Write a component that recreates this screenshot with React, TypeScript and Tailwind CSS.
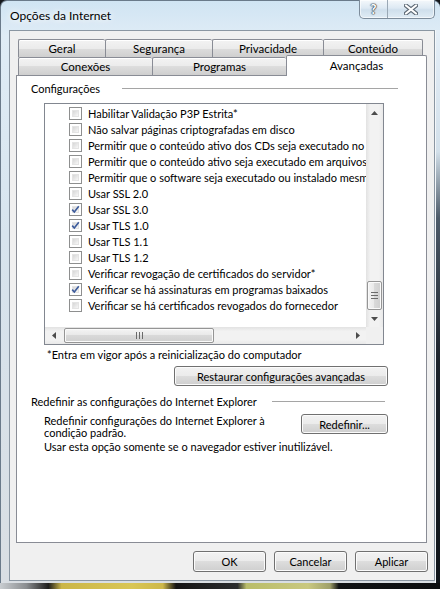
import React from "react";

const items: { label: string; checked: boolean }[] = [
  { label: "Habilitar Validação P3P Estrita*", checked: false },
  { label: "Não salvar páginas criptografadas em disco", checked: false },
  { label: "Permitir que o conteúdo ativo dos CDs seja executado no Meu Computador*", checked: false },
  { label: "Permitir que o conteúdo ativo seja executado em arquivos no Meu Computador*", checked: false },
  { label: "Permitir que o software seja executado ou instalado mesmo que a assinatura seja inválida", checked: false },
  { label: "Usar SSL 2.0", checked: false },
  { label: "Usar SSL 3.0", checked: true },
  { label: "Usar TLS 1.0", checked: true },
  { label: "Usar TLS 1.1", checked: false },
  { label: "Usar TLS 1.2", checked: false },
  { label: "Verificar revogação de certificados do servidor*", checked: false },
  { label: "Verificar se há assinaturas em programas baixados", checked: true },
  { label: "Verificar se há certificados revogados do fornecedor", checked: false },
];

function Checkbox({ checked }: { checked: boolean }) {
  return (
    <div className="relative w-[13px] h-[13px] shrink-0 border border-[#8e8f8f] bg-white p-[2px]">
      <div className="w-full h-full bg-[linear-gradient(135deg,#d6d6d6,#f7f7f7)] border border-[#e4e4e4]" />
      {checked && (
        <svg className="absolute left-0 top-0" width="11" height="11" viewBox="0 0 11 11">
          <path d="M2.2 5.6 L4.3 8 L8.8 2.2" fill="none" stroke="#3d5c9c" strokeWidth="1.6" />
        </svg>
      )}
    </div>
  );
}

function Button({ label, className }: { label: string; className: string }) {
  return (
    <div
      className={
        "flex items-center justify-center rounded-[3px] border border-[#707070] bg-[linear-gradient(#f2f2f2,#ebebeb_50%,#dddddd_50%,#cfcfcf)] shadow-[inset_0_0_0_1px_#fbfbfb] text-black " +
        className
      }
    >
      {label}
    </div>
  );
}

function Arrow({ dir }: { dir: "up" | "down" | "left" | "right" }) {
  const pts = {
    up: "0,4 3.5,0 7,4",
    down: "0,0 7,0 3.5,4",
    left: "4,0 4,7 0,3.5",
    right: "0,0 4,3.5 0,7",
  }[dir];
  const vertical = dir === "up" || dir === "down";
  return (
    <svg width={vertical ? 7 : 4} height={vertical ? 4 : 7} viewBox={vertical ? "0 0 7 4" : "0 0 4 7"}>
      <polygon points={pts} fill="#4d4d4d" />
    </svg>
  );
}

function ListBox() {
  return (
    <div className="ml-[27px] mt-[7px] w-[340px] h-[242px] border border-[#828790] bg-white flex flex-col">
      <div className="flex flex-1 min-h-0">
        <div className="flex-1 min-w-0 overflow-hidden pt-[1px]">
          {items.map((it) => (
            <div key={it.label} className="flex items-center h-[16px] pl-[24px] gap-[6px] whitespace-nowrap">
              <Checkbox checked={it.checked} />
              <span>{it.label}</span>
            </div>
          ))}
        </div>
        {/* vertical scrollbar */}
        <div className="w-[17px] flex flex-col bg-[linear-gradient(to_right,#e2e2e2,#f2f2f2_25%,#f2f2f2_75%,#e9e9e9)]">
          <div className="h-[17px] flex items-center justify-center">
            <Arrow dir="up" />
          </div>
          <div className="flex-1" />
          <div className="mx-[1px] h-[29px] rounded-[2px] border border-[#959595] bg-[linear-gradient(to_right,#f4f4f4,#e8e8e8_50%,#d9d9d9_50%,#cfcfcf)] shadow-[inset_0_0_0_1px_#fafafa] flex flex-col items-center justify-center gap-[2px]">
            <div className="w-[7px] h-px bg-[#6a6a6a]" />
            <div className="w-[7px] h-px bg-[#6a6a6a]" />
            <div className="w-[7px] h-px bg-[#6a6a6a]" />
          </div>
          <div className="h-[17px] flex items-center justify-center">
            <Arrow dir="down" />
          </div>
        </div>
      </div>
      {/* horizontal scrollbar */}
      <div className="h-[17px] flex">
        <div className="flex-1 flex items-center bg-[linear-gradient(#e2e2e2,#f2f2f2_25%,#f2f2f2_75%,#e9e9e9)]">
          <div className="w-[17px] h-full flex items-center justify-center">
            <Arrow dir="left" />
          </div>
          <div className="ml-[2px] w-[150px] h-[15px] rounded-[2px] border border-[#959595] bg-[linear-gradient(#f4f4f4,#e8e8e8_50%,#d9d9d9_50%,#cfcfcf)] shadow-[inset_0_0_0_1px_#fafafa] flex items-center justify-center gap-[2px]">
            <div className="w-px h-[7px] bg-[#6a6a6a]" />
            <div className="w-px h-[7px] bg-[#6a6a6a]" />
            <div className="w-px h-[7px] bg-[#6a6a6a]" />
          </div>
          <div className="flex-1" />
          <div className="w-[17px] h-full flex items-center justify-center">
            <Arrow dir="right" />
          </div>
        </div>
        <div className="w-[17px] bg-[#f0f0f0]" />
      </div>
    </div>
  );
}

function Tab({ label, w, selected }: { label: string; w: string; selected?: boolean }) {
  if (selected) {
    return (
      <div
        className={
          "relative z-10 -mt-[2px] -mb-px h-[21px] flex justify-center pt-[2px] bg-white border border-b-0 border-[#898c95] rounded-t-[2px] " +
          w
        }
      >
        {label}
      </div>
    );
  }
  return (
    <div
      className={
        "h-[18px] flex items-center justify-center border-t border-l border-[#898c95] rounded-t-[2px] bg-[linear-gradient(#f3f3f3,#ebebeb_50%,#dddddd_50%,#cfcfcf)] shadow-[inset_0_1px_0_#fff] " +
        w
      }
    >
      {label}
    </div>
  );
}

export default function App() {
  return (
    <div className="w-[440px] h-[589px] overflow-hidden flex flex-col bg-[#15181c] font-['Segoe_UI',Lato,'Liberation_Sans',sans-serif] text-[11px] leading-[15px] text-black">
      {/* window */}
      <div className="h-[583px] flex flex-col rounded-t-[7px] border-l border-t border-[#6a7a8a] bg-[linear-gradient(to_bottom,#d0e4f3,#dfecf6_6%,#d7e4ee_40%,#d9dee3_100%)]">
        {/* title bar */}
        <div className="h-[29px] flex items-start">
          <div className="pl-[9px] pt-[7px] text-[12px] [text-shadow:0_0_6px_#fff,0_0_10px_#fff]">Opções da Internet</div>
          <div className="ml-auto mr-[5px] flex h-[19px] -mt-px rounded-b-[5px] border border-t-0 border-[#7d8c9b] bg-[linear-gradient(#f4f8fb,#dde9f3_45%,#cfdfec_55%,#e0ecf5)] shadow-[inset_0_0_0_1px_rgba(255,255,255,0.6)]">
            <div className="w-[28px] flex items-center justify-center border-r border-[#9aa8b5] font-bold text-[13px] text-white [text-shadow:0_0_1px_#3c4650,0_0_1px_#3c4650,0_0_1px_#3c4650,0_0_2px_#3c4650]">
              ?
            </div>
            <div className="w-[46px] flex items-center justify-center">
              <svg width="14" height="11" viewBox="0 0 14 11">
                <path d="M2 1.5 L12 9.5 M12 1.5 L2 9.5" stroke="#5b6773" strokeWidth="4.2" strokeLinecap="round" />
                <path d="M2 1.5 L12 9.5 M12 1.5 L2 9.5" stroke="#ffffff" strokeWidth="2.2" strokeLinecap="round" />
              </svg>
            </div>
          </div>
        </div>

        <div className="flex flex-1 min-h-0">
          <div className="w-[8px]" />
          {/* client area */}
          <div className="w-[426px] h-[551px] border border-[#8a96a2] bg-[#f0f0f0] pl-[6px] pt-[8px] flex flex-col">
            {/* tabs */}
            <div className="w-[411px] flex flex-col text-[11.5px]">
              <div className="flex pl-[2px]">
                <Tab label="Geral" w="w-[87px]" />
                <Tab label="Segurança" w="w-[107px]" />
                <Tab label="Privacidade" w="w-[111px]" />
                <div className="w-[100px] h-[18px] flex items-center justify-center border-t border-l border-r border-[#898c95] rounded-t-[2px] bg-[linear-gradient(#f3f3f3,#ebebeb_50%,#dddddd_50%,#cfcfcf)] shadow-[inset_0_1px_0_#fff]">
                  Conteúdo
                </div>
              </div>
              <div className="flex pl-[2px] items-start">
                <Tab label="Conexões" w="w-[134px]" />
                <Tab label="Programas" w="w-[134px]" />
                <Tab label="Avançadas" w="w-[141px]" selected />
              </div>
            </div>

            {/* panel */}
            <div className="w-[411px] h-[468px] border border-[#898c95] bg-white flex flex-col">
              <div className="mt-[5px] pl-[14px] h-[15px] flex items-center">
                <span className="w-[91px]">Configurações</span>
                <div className="w-[276px] h-px bg-[#a5a5a5]" />
              </div>

              <ListBox />

              <div className="mt-[2px] ml-[30px] h-[15px]">*Entra em vigor após a reinicialização do computador</div>

              <Button label="Restaurar configurações avançadas" className="mt-[4px] ml-[157px] w-[214px] h-[20px]" />

              <div className="mt-[8px] pl-[14px] h-[15px] flex items-center">
                <span className="w-[241px] whitespace-nowrap">Redefinir as configurações do Internet Explorer</span>
                <div className="w-[113px] h-px bg-[#a5a5a5]" />
              </div>

              <div className="mt-[5px] ml-[27px] flex items-start">
                <div className="w-[257px] pt-[1px] leading-[12px]">
                  <div>Redefinir configurações do Internet Explorer à</div>
                  <div>condição padrão.</div>
                </div>
                <Button label="Redefinir..." className="w-[87px] h-[20px]" />
              </div>

              <div className="ml-[27px] h-[15px] whitespace-nowrap">
                Usar esta opção somente se o navegador estiver inutilizável.
              </div>
            </div>

            {/* dialog buttons */}
            <div className="mt-[8px] flex justify-end gap-[8px] pr-[6px]">
              <Button label="OK" className="w-[73px] h-[21px]" />
              <Button label="Cancelar" className="w-[73px] h-[21px]" />
              <Button label="Aplicar" className="w-[73px] h-[21px]" />
            </div>
          </div>
          {/* right glass edge */}
          <div className="flex-1 bg-[linear-gradient(to_bottom,#e4eef7,#d3e0ea_22%,#4d5b69_34%,#1c232b_60%,#10151a)] border-l border-[#f4f7fa]" />
        </div>
      </div>
      {/* desktop below */}
      <div className="flex-1 bg-[linear-gradient(to_right,#c9cdd1_0,#8a8d90_6%,#1d1d1d_11%,#cbb648_14%,#d9c655_30%,#cdb84a_37%,#141414_40%,#2a2c2e_54%,#b9bd6a_56%,#c9c880_70%,#9fa06a_75%,#101214_77%,#0c0e10)]" />
    </div>
  );
}
